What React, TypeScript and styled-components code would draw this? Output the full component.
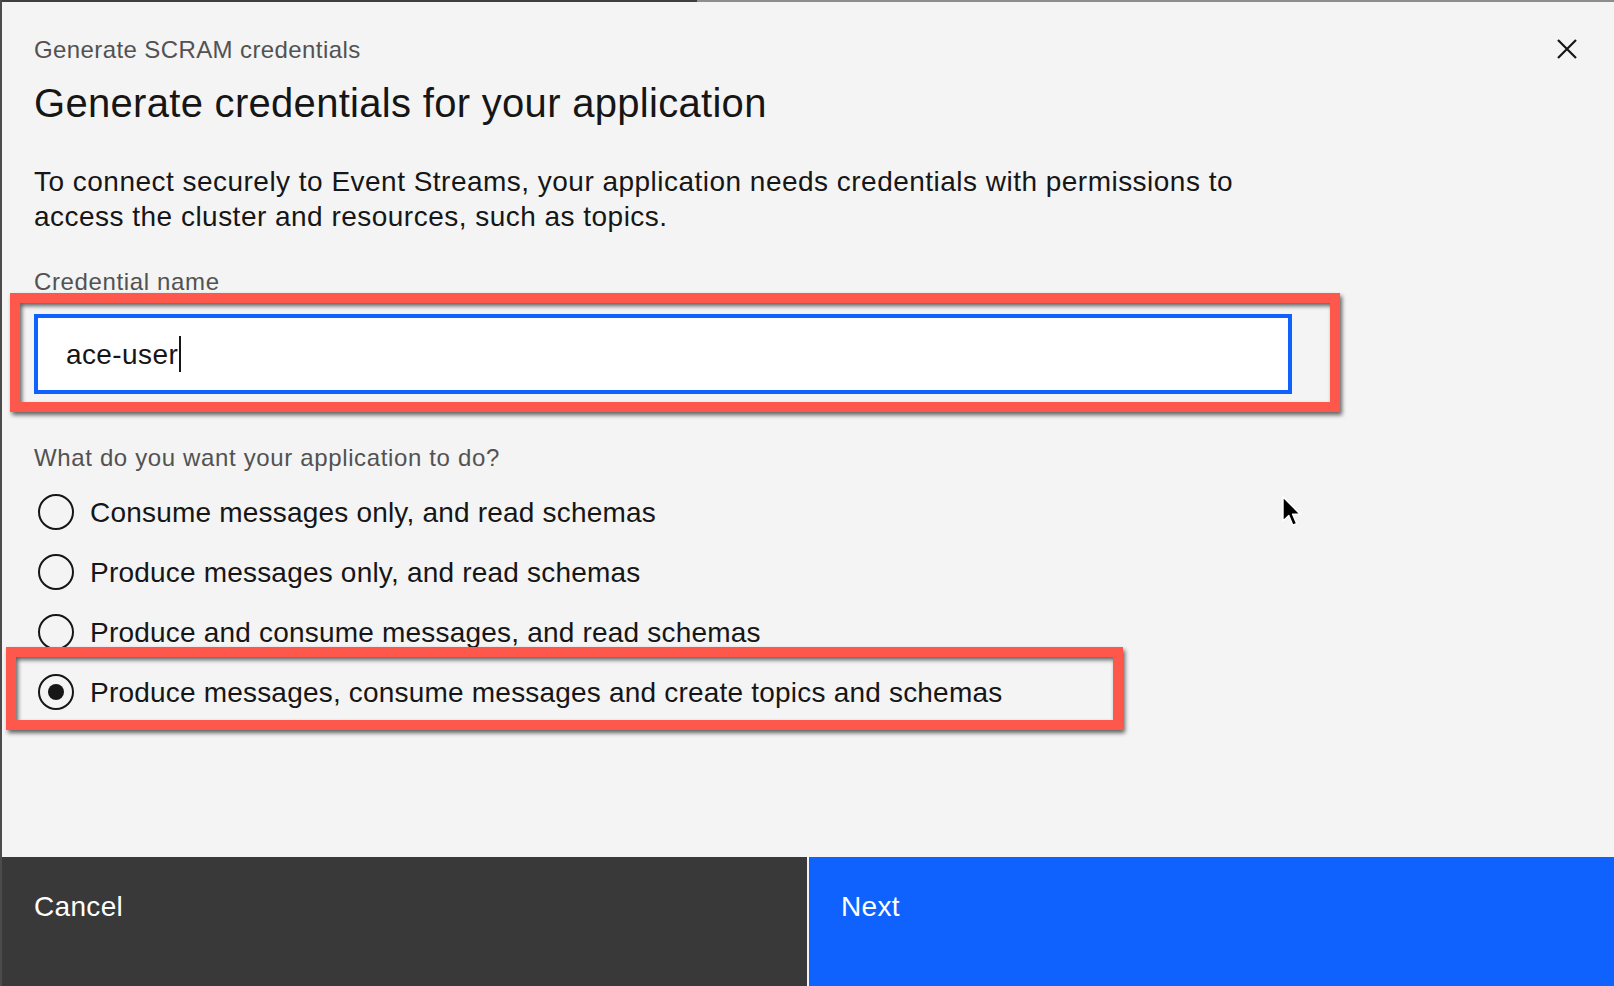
import styled, { createGlobalStyle } from "styled-components"

const GlobalStyle = createGlobalStyle`
    html, body {
        margin: 0;
        padding: 0;
        background: #f4f4f4;
    }
    body {
        font-family: "Liberation Sans", Arial, sans-serif;
        color: #161616;
    }
`

const options = [
    "Consume messages only, and read schemas",
    "Produce messages only, and read schemas",
    "Produce and consume messages, and read schemas",
    "Produce messages, consume messages and create topics and schemas",
]
const selectedOption = 3

export default function App() {
    return (
        <>
            <GlobalStyle />
            <Modal>
                <TopEdge />
                <Content>
                    <Header>
                        <div>
                            <ModalLabel>Generate SCRAM credentials</ModalLabel>
                            <ModalTitle>Generate credentials for your application</ModalTitle>
                        </div>
                        <CloseButton aria-label="Close">
                            <svg width="20" height="20" viewBox="0 0 20 20">
                                <path d="M1 1 L19 19 M19 1 L1 19" stroke="#161616" strokeWidth="2.2" fill="none" />
                            </svg>
                        </CloseButton>
                    </Header>
                    <Intro>
                        To connect securely to Event Streams, your application needs credentials with permissions to
                        access the cluster and resources, such as topics.
                    </Intro>
                    <FieldLabel $top={32}>Credential name</FieldLabel>
                    <Highlight $top={16}>
                        <TextField>
                            ace-user<Caret />
                        </TextField>
                        <RedFrame $left={-24} $top={-21} $width={1330} $height={119} />
                    </Highlight>
                    <FieldLabel $top={48}>What do you want your application to do?</FieldLabel>
                    <RadioGroup>
                        {options.map((label, i) => {
                            const row = (
                                <RadioRow key={label}>
                                    <RadioCircle $checked={i === selectedOption} />
                                    <RadioText>{label}</RadioText>
                                </RadioRow>
                            )
                            return i === selectedOption ? (
                                <Highlight key={label} $top={0}>
                                    {row}
                                    <RedFrame $left={-28} $top={-15} $width={1117} $height={83} />
                                </Highlight>
                            ) : (
                                row
                            )
                        })}
                    </RadioGroup>
                </Content>
                <Footer>
                    <FooterButton $kind="secondary">Cancel</FooterButton>
                    <FooterButton $kind="primary">Next</FooterButton>
                </Footer>
                <Pointer width="20" height="32" viewBox="0 0 20 32">
                    <path
                        d="M1 1 L1 25 L6.8 19.6 L10.8 29.2 L14.6 27.6 L10.6 18.2 L18.2 18.2 Z"
                        fill="#000"
                        stroke="#fff"
                        strokeWidth="1.4"
                        strokeLinejoin="round"
                    />
                </Pointer>
            </Modal>
        </>
    )
}

const Modal = styled.div`
    position: relative;
    box-sizing: border-box;
    height: 100vh;
    display: flex;
    flex-direction: column;
    border-left: 2px solid #4b4b4b;
    background: #f4f4f4;
    overflow: hidden;
`

const TopEdge = styled.div`
    height: 2px;
    flex: none;
    background: linear-gradient(to right, #3f3f3f 0 695px, #8d8d8d 695px);
`

const Content = styled.div`
    flex: 1;
    display: flex;
    flex-direction: column;
    align-items: flex-start;
    padding: 32px 37px 0 32px;
`

const Header = styled.div`
    align-self: stretch;
    display: flex;
    justify-content: space-between;
    align-items: flex-start;
`

const ModalLabel = styled.div`
    font-size: 24px;
    line-height: 32px;
    letter-spacing: 0.4px;
    color: #525252;
`

const ModalTitle = styled.h2`
    margin: 13px 0 0;
    font-size: 40px;
    line-height: 48px;
    font-weight: 400;
    letter-spacing: 0.3px;
    color: #161616;
`

const CloseButton = styled.button`
    margin-top: 5px;
    padding: 0;
    border: 0;
    background: none;
    width: 20px;
    height: 20px;
    display: flex;
`

const Intro = styled.p`
    margin: 37px 0 0;
    max-width: 1250px;
    font-size: 28px;
    line-height: 35px;
    letter-spacing: 0.48px;
    color: #161616;
`

const FieldLabel = styled.div<{ $top: number }>`
    margin-top: ${(p) => p.$top}px;
    font-size: 24px;
    line-height: 32px;
    letter-spacing: 0.64px;
    color: #525252;
`

const Highlight = styled.div<{ $top: number }>`
    position: relative;
    margin-top: ${(p) => p.$top}px;
`

const RedFrame = styled.div<{ $left: number; $top: number; $width: number; $height: number }>`
    position: absolute;
    left: ${(p) => p.$left}px;
    top: ${(p) => p.$top}px;
    width: ${(p) => p.$width}px;
    height: ${(p) => p.$height}px;
    box-sizing: border-box;
    border: 10px solid #fd584b;
    filter: drop-shadow(2px 3px 2px rgba(0, 0, 0, 0.6));
    pointer-events: none;
`

const TextField = styled.div`
    box-sizing: border-box;
    width: 1258px;
    height: 80px;
    display: flex;
    align-items: center;
    padding-left: 28px;
    border: 4px solid #0f62fe;
    background: #ffffff;
    font-size: 28px;
    line-height: 35px;
    letter-spacing: 0.4px;
    color: #161616;
`

const Caret = styled.span`
    display: inline-block;
    width: 2px;
    height: 36px;
    margin-left: 1px;
    background: #161616;
`

const RadioGroup = styled.div`
    margin-top: 8px;
    display: flex;
    flex-direction: column;
`

const RadioRow = styled.div`
    height: 60px;
    display: flex;
    align-items: center;
    gap: 16px;
    padding-left: 4px;
`

const RadioCircle = styled.span<{ $checked: boolean }>`
    box-sizing: border-box;
    width: 36px;
    height: 36px;
    border: 2px solid #161616;
    border-radius: 50%;
    display: flex;
    align-items: center;
    justify-content: center;
    &::after {
        content: "";
        display: ${(p) => (p.$checked ? "block" : "none")};
        width: 16px;
        height: 16px;
        border-radius: 50%;
        background: #161616;
    }
`

const RadioText = styled.span`
    font-size: 28px;
    line-height: 35px;
    letter-spacing: 0.2px;
    color: #161616;
`

const Footer = styled.div`
    flex: none;
    height: 129px;
    display: grid;
    grid-template-columns: 1fr 1fr;
    gap: 2px;
`

const FooterButton = styled.button<{ $kind: "primary" | "secondary" }>`
    border: 0;
    margin: 0;
    padding: 32px 32px 0;
    text-align: left;
    align-self: stretch;
    display: flex;
    align-items: flex-start;
    font-family: "Liberation Sans", Arial, sans-serif;
    font-size: 28px;
    line-height: 35px;
    letter-spacing: 0.32px;
    color: #ffffff;
    background: ${(p) => (p.$kind === "primary" ? "#0f62fe" : "#393939")};
`

const Pointer = styled.svg`
    position: absolute;
    left: 1280px;
    top: 496px;
`
